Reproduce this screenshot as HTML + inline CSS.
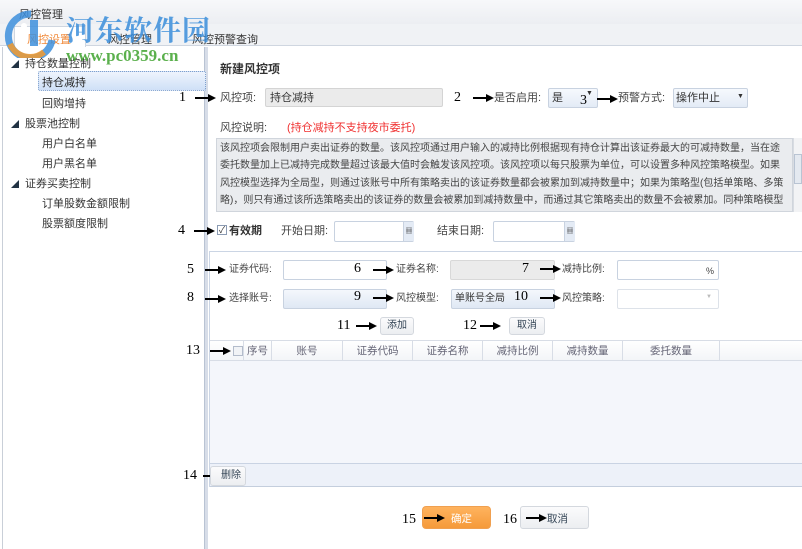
<!DOCTYPE html>
<html><head><meta charset="utf-8"><style>
*{margin:0;padding:0;box-sizing:border-box}
body{width:802px;height:549px;overflow:hidden;background:#fff;font-family:"Liberation Sans","Noto Sans CJK SC",sans-serif;font-size:11px;color:#333;position:relative}
.a{position:absolute;white-space:nowrap}
.n{position:absolute;font-size:14px;color:#000;font-family:"Liberation Serif","Noto Serif CJK SC",serif;line-height:14px}
.ar{position:absolute;width:22px;height:10px}
.in{position:absolute;border:1px solid #c8d2e0;background:#fff;border-radius:2px}
.lb{position:absolute;color:#444;font-size:11px;line-height:12px;white-space:nowrap}
.btn{position:absolute;border:1px solid #d4d8de;border-radius:3px;background:linear-gradient(#fbfbfc,#eceef1);font-size:10px;color:#345;text-align:center}
.th{position:absolute;top:341px;height:20px;line-height:20px;border-right:1px solid #d8dde6;color:#667;font-size:10.5px;text-align:center}
.dl{display:block;height:17.3px;white-space:nowrap}
</style></head><body>
<svg width="0" height="0" style="position:absolute"><defs><symbol id="arr" viewBox="0 0 22 10"><path d="M0 5H15" stroke="#000" stroke-width="2"/><path d="M13 1L21 5L13 9Z" fill="#000"/></symbol></defs></svg>

<div class="a" style="left:0;top:0;width:802px;height:24px;background:linear-gradient(#f7f8fa,#eceef2)"></div>
<div class="a" style="left:19px;top:6px;font-size:11px;color:#333">风控管理</div>
<div class="a" style="left:0;top:24px;width:802px;height:22px;background:#f0f2f5;border-bottom:1px solid #cfd6e0"></div>
<div class="a" style="left:14px;top:26px;width:72px;height:21px;background:#fff;border:1px solid #cfd6e0;border-bottom:none"></div>
<div class="a" style="left:27px;top:31px;color:#f08a3a;font-size:11px">风控设置</div>
<div class="a" style="left:108px;top:31px;color:#333;font-size:11px">风控管理</div>
<div class="a" style="left:192px;top:31px;color:#333;font-size:11px">风控预警查询</div>

<div class="a" style="left:2px;top:47px;width:1px;height:502px;background:#c9cfd8"></div>
<div class="a" style="left:204px;top:47px;width:4px;height:502px;background:#d7dde8;border-left:1px solid #b9c3d3"></div>
<div class="a" style="left:11px;top:59px;font-size:8px;color:#234">◢</div>
<div class="a" style="left:25px;top:55px;color:#333">持仓数量控制</div>
<div class="a" style="left:38px;top:71px;width:168px;height:20px;border:1px dotted #7fa0cc;border-radius:2px;background:linear-gradient(#eef4fd,#cfe0f7)"></div>
<div class="a" style="left:42px;top:74px;color:#222">持仓减持</div>
<div class="a" style="left:42px;top:95px;color:#333">回购增持</div>
<div class="a" style="left:11px;top:119px;font-size:8px;color:#234">◢</div>
<div class="a" style="left:25px;top:115px;color:#333">股票池控制</div>
<div class="a" style="left:42px;top:135px;color:#333">用户白名单</div>
<div class="a" style="left:42px;top:155px;color:#333">用户黑名单</div>
<div class="a" style="left:11px;top:179px;font-size:8px;color:#234">◢</div>
<div class="a" style="left:25px;top:175px;color:#333">证券买卖控制</div>
<div class="a" style="left:42px;top:195px;color:#333">订单股数金额限制</div>
<div class="a" style="left:42px;top:215px;color:#333">股票额度限制</div>

<svg class="a" style="left:4px;top:10px" width="54" height="48" viewBox="0 0 54 48"><path d="M27 4A22 22 0 1 0 48 30" fill="none" stroke="#3d8fdc" stroke-width="7" opacity=".85"/><path d="M6 34A22 22 0 0 0 40 42" fill="none" stroke="#f29a2e" stroke-width="6" opacity=".85"/><rect x="26" y="10" width="8" height="26" fill="#3d8fdc" opacity=".85"/><circle cx="20" cy="16" r="3" fill="#fff"/></svg>
<div class="a" style="left:66px;top:9px;font-size:28px;font-weight:bold;color:#3a8edb;opacity:.85;font-family:'Liberation Serif','Noto Serif CJK SC',serif;letter-spacing:1px">河东软件园</div>
<div class="a" style="left:66px;top:46px;font-size:17px;font-weight:bold;color:#4aa83a;opacity:.9;font-family:'Liberation Serif',serif">www.pc0359.cn</div>

<div class="a" style="left:220px;top:60px;font-size:12px;font-weight:bold;color:#333">新建风控项</div>

<div class="n" style="left:179px;top:91px">1</div><svg class="ar" style="left:195px;top:93px"><use href="#arr"/></svg>
<div class="lb" style="left:220px;top:92px">风控项:</div>
<div class="in" style="left:265px;top:88px;width:178px;height:19px;background:#ebebeb;border-color:#d4d4d4"></div>
<div class="lb" style="left:270px;top:92px;color:#333">持仓减持</div>
<div class="n" style="left:454px;top:91px">2</div><svg class="ar" style="left:473px;top:93px"><use href="#arr"/></svg>
<div class="lb" style="left:494px;top:92px">是否启用:</div>
<div class="in" style="left:548px;top:88px;width:50px;height:20px;background:linear-gradient(#f6f9fd,#e3ebf6)"></div>
<div class="lb" style="left:552px;top:92px;color:#333">是</div>
<div class="n" style="left:580px;top:94px">3</div>
<div class="a" style="left:586px;top:90px;font-size:7px">▼</div>
<svg class="ar" style="left:597px;top:94px"><use href="#arr"/></svg>
<div class="lb" style="left:618px;top:92px">预警方式:</div>
<div class="in" style="left:673px;top:88px;width:75px;height:20px;background:linear-gradient(#f6f9fd,#e3ebf6)"></div>
<div class="lb" style="left:676px;top:92px;color:#333">操作中止</div>
<div class="a" style="left:737px;top:93px;font-size:7px;color:#333">▼</div>

<div class="lb" style="left:220px;top:122px">风控说明:</div>
<div class="lb" style="left:287px;top:122px;color:#f03030">(持仓减持不支持夜市委托)</div>
<div class="a" style="left:216px;top:138px;width:577px;height:74px;background:#eaecef;border:1px solid #d0d5dc;overflow:hidden"></div>
<div class="a" style="left:220px;top:140px;width:572px;height:70px;overflow:hidden;font-size:10px;letter-spacing:0;line-height:17.3px;color:#444">
<span class="dl">该风控项会限制用户卖出证券的数量。该风控项通过用户输入的减持比例根据现有持仓计算出该证券最大的可减持数量，当在途</span>
<span class="dl">委托数量加上已减持完成数量超过该最大值时会触发该风控项。该风控项以每只股票为单位，可以设置多种风控策略模型。如果</span>
<span class="dl">风控模型选择为全局型，则通过该账号中所有策略卖出的该证券数量都会被累加到减持数量中；如果为策略型(包括单策略、多策</span>
<span class="dl">略)，则只有通过该所选策略卖出的该证券的数量会被累加到减持数量中，而通过其它策略卖出的数量不会被累加。同种策略模型</span>
<span class="dl">下不允许设置重复，即同一账号同一证券只能设置一个全局型风控项</span>
</div>
<div class="a" style="left:793px;top:138px;width:9px;height:74px;background:#f2f3f5;border-left:1px solid #d8dce2"></div>
<div class="a" style="left:794px;top:154px;width:8px;height:30px;background:#e4e9f0;border:1px solid #b9c4d3"></div>

<div class="n" style="left:178px;top:224px">4</div><svg class="ar" style="left:194px;top:226px"><use href="#arr"/></svg>
<div class="a" style="left:217px;top:225px;width:10px;height:10px;border:1px solid #8b9bb3;background:#fff;font-size:9px;line-height:8px;text-align:center">✓</div>
<div class="lb" style="left:229px;top:225px;font-weight:bold;color:#333">有效期</div>
<div class="lb" style="left:281px;top:225px">开始日期:</div>
<div class="in" style="left:334px;top:221px;width:80px;height:21px"></div>
<div class="a" style="left:403px;top:222px;width:11px;height:19px;background:#e4ebf5;border-left:1px solid #c8d2e0;font-size:7px;line-height:19px;text-align:center">▦</div>
<div class="lb" style="left:437px;top:225px">结束日期:</div>
<div class="in" style="left:493px;top:221px;width:82px;height:21px"></div>
<div class="a" style="left:564px;top:222px;width:11px;height:19px;background:#e4ebf5;border-left:1px solid #c8d2e0;font-size:7px;line-height:19px;text-align:center">▦</div>

<div class="a" style="left:209px;top:251px;width:593px;height:236px;border:1px solid #cbd5e4;border-right:none"></div>

<div class="n" style="left:187px;top:263px">5</div><svg class="ar" style="left:205px;top:265px"><use href="#arr"/></svg>
<div class="lb" style="left:229px;top:264px;font-size:10px">证券代码:</div>
<div class="in" style="left:283px;top:260px;width:104px;height:20px"></div>
<div class="n" style="left:354px;top:262px">6</div><svg class="ar" style="left:373px;top:265px"><use href="#arr"/></svg>
<div class="lb" style="left:396px;top:264px;font-size:10px">证券名称:</div>
<div class="in" style="left:450px;top:260px;width:105px;height:20px;background:#ebebeb;border-color:#d8d8d8"></div>
<div class="n" style="left:522px;top:262px">7</div><svg class="ar" style="left:540px;top:264px"><use href="#arr"/></svg>
<div class="lb" style="left:562px;top:264px;font-size:10px">减持比例:</div>
<div class="in" style="left:617px;top:260px;width:102px;height:20px"></div>
<div class="lb" style="left:706px;top:265px;font-size:9px">%</div>

<div class="n" style="left:187px;top:291px">8</div><svg class="ar" style="left:205px;top:294px"><use href="#arr"/></svg>
<div class="lb" style="left:229px;top:293px;font-size:10px">选择账号:</div>
<div class="in" style="left:283px;top:289px;width:104px;height:20px;background:linear-gradient(#f4f7fc,#dfe8f4)"></div>
<div class="n" style="left:354px;top:290px">9</div><svg class="ar" style="left:373px;top:293px"><use href="#arr"/></svg>
<div class="lb" style="left:396px;top:293px;font-size:10px">风控模型:</div>
<div class="in" style="left:451px;top:289px;width:104px;height:20px;background:linear-gradient(#f4f7fc,#dfe8f4)"></div>
<div class="lb" style="left:455px;top:293px;font-size:10px;color:#333">单账号全局</div>
<div class="n" style="left:514px;top:290px">10</div><svg class="ar" style="left:540px;top:293px"><use href="#arr"/></svg>
<div class="lb" style="left:562px;top:293px;font-size:10px">风控策略:</div>
<div class="in" style="left:617px;top:289px;width:102px;height:20px;border-color:#dde2e9"></div>
<div class="a" style="left:706px;top:294px;font-size:6px;color:#bbb">▼</div>

<div class="n" style="left:337px;top:319px">11</div><svg class="ar" style="left:356px;top:321px"><use href="#arr"/></svg>
<div class="btn" style="left:380px;top:317px;width:34px;height:18px;line-height:16px">添加</div>
<div class="n" style="left:463px;top:319px">12</div><svg class="ar" style="left:480px;top:321px"><use href="#arr"/></svg>
<div class="btn" style="left:509px;top:317px;width:36px;height:18px;line-height:16px">取消</div>

<div class="a" style="left:210px;top:340px;width:592px;height:21px;background:linear-gradient(#fff,#f3f5f8);border-top:1px solid #d8dde6;border-bottom:1px solid #d8dde6"></div>
<div class="n" style="left:186px;top:344px">13</div><svg class="ar" style="left:210px;top:346px"><use href="#arr"/></svg>
<div class="th" style="left:210px;width:34px"></div>
<div class="a" style="left:233px;top:346px;width:10px;height:10px;border:1px solid #b3bccb;background:#f1f3f6"></div>
<div class="th" style="left:244px;width:28px">序号</div>
<div class="th" style="left:272px;width:71px">账号</div>
<div class="th" style="left:343px;width:70px">证券代码</div>
<div class="th" style="left:413px;width:70px">证券名称</div>
<div class="th" style="left:483px;width:70px">减持比例</div>
<div class="th" style="left:553px;width:70px">减持数量</div>
<div class="th" style="left:623px;width:97px">委托数量</div>
<div class="a" style="left:210px;top:361px;width:592px;height:102px;background:#f4f6fb"></div>
<div class="a" style="left:210px;top:463px;width:592px;height:24px;background:#edf1f9;border-top:1px solid #c9d3e3;border-bottom:1px solid #c4cedd"></div>
<div class="n" style="left:183px;top:469px">14</div><svg class="ar" style="left:203px;top:471px"><use href="#arr"/></svg>
<div class="btn" style="left:210px;top:466px;width:36px;height:20px;line-height:18px;text-align:right;padding-right:4px">删除</div>

<div class="n" style="left:402px;top:513px">15</div>
<div class="a" style="left:422px;top:506px;width:69px;height:23px;border-radius:4px;background:linear-gradient(#ffb35e,#f59a3a);border:1px solid #f0a050"></div>
<svg class="ar" style="left:424px;top:513px"><use href="#arr"/></svg>
<div class="a" style="left:451px;top:511px;color:#fff;font-size:10.5px">确定</div>
<div class="n" style="left:503px;top:513px">16</div>
<div class="btn" style="left:520px;top:506px;width:69px;height:23px"></div>
<svg class="ar" style="left:526px;top:513px"><use href="#arr"/></svg>
<div class="a" style="left:547px;top:511px;color:#345;font-size:10.5px">取消</div>
</body></html>
